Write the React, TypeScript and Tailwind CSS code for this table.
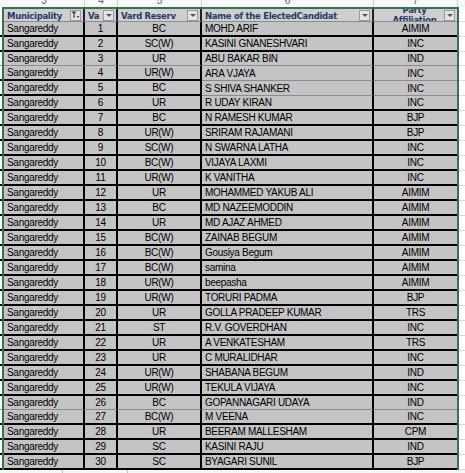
import React from 'react';

type Row = [number, string, string, string];

const rows: Row[] = [
  [1, 'BC', 'MOHD ARIF', 'AIMIM'],
  [2, 'SC(W)', 'KASINI GNANESHVARI', 'INC'],
  [3, 'UR', 'ABU BAKAR BIN', 'IND'],
  [4, 'UR(W)', 'ARA VJAYA', 'INC'],
  [5, 'BC', 'S SHIVA SHANKER', 'INC'],
  [6, 'UR', 'R UDAY KIRAN', 'INC'],
  [7, 'BC', 'N RAMESH KUMAR', 'BJP'],
  [8, 'UR(W)', 'SRIRAM RAJAMANI', 'BJP'],
  [9, 'SC(W)', 'N SWARNA LATHA', 'INC'],
  [10, 'BC(W)', 'VIJAYA LAXMI', 'INC'],
  [11, 'UR(W)', 'K VANITHA', 'INC'],
  [12, 'UR', 'MOHAMMED YAKUB ALI', 'AIMIM'],
  [13, 'BC', 'MD NAZEEMODDIN', 'AIMIM'],
  [14, 'UR', 'MD AJAZ AHMED', 'AIMIM'],
  [15, 'BC(W)', 'ZAINAB BEGUM', 'AIMIM'],
  [16, 'BC(W)', 'Gousiya Begum', 'AIMIM'],
  [17, 'BC(W)', 'samina', 'AIMIM'],
  [18, 'UR(W)', 'beepasha', 'AIMIM'],
  [19, 'UR(W)', 'TORURI PADMA', 'BJP'],
  [20, 'UR', 'GOLLA PRADEEP KUMAR', 'TRS'],
  [21, 'ST', 'R.V. GOVERDHAN', 'INC'],
  [22, 'UR', 'A VENKATESHAM', 'TRS'],
  [23, 'UR', 'C MURALIDHAR', 'INC'],
  [24, 'UR(W)', 'SHABANA BEGUM', 'IND'],
  [25, 'UR(W)', 'TEKULA VIJAYA', 'INC'],
  [26, 'BC', 'GOPANNAGARI UDAYA', 'IND'],
  [27, 'BC(W)', 'M VEENA', 'INC'],
  [28, 'UR', 'BEERAM MALLESHAM', 'CPM'],
  [29, 'SC', 'KASINI RAJU', 'IND'],
  [30, 'SC', 'BYAGARI SUNIL', 'BJP'],
];

// rows whose bottom rule is a thin grey line instead of the heavy black one
const thinAll = new Set([3, 26]);
const thinRight = new Set([4, 5]);

const THICK = 'border-b-2 border-b-black';
const THIN = 'border-b border-b-[#8c8c8c]';

function FilterButton({ active }: { active?: boolean }) {
  return (
    <div className="w-[11px] h-[11px] mr-[2px] shrink-0 border border-[#9b9b9b] bg-[#e4e4e4] flex items-center justify-center">
      {active ? (
        <svg width="9" height="8" viewBox="0 0 9 8">
          <path d="M0.5 0.5h5L3.6 3v3.5L2.4 7.2V3z" fill="#444" />
          <path d="M5.5 5h3L7 7z" fill="#444" />
        </svg>
      ) : (
        <svg width="6" height="3" viewBox="0 0 6 3">
          <path d="M0 0h6L3 3z" fill="#555" />
        </svg>
      )}
    </div>
  );
}

function HeaderCell({ width, children, button, last }: { width: string; children: React.ReactNode; button?: React.ReactNode; last?: boolean }) {
  return (
    <div
      className={`${width} h-full flex items-center bg-[#cfcfcf] border-b border-b-[#8c8c8c] ${last ? '' : 'border-r-2 border-r-[#222]'} overflow-hidden`}
    >
      <div className="flex-1 min-w-0 overflow-hidden whitespace-nowrap pl-[3px]">{children}</div>
      {button}
    </div>
  );
}

function DataRow({ row }: { row: Row }) {
  const [no, res, name, party] = row;
  const left = thinAll.has(no) ? THIN : THICK;
  const right = thinAll.has(no) || thinRight.has(no) ? THIN : THICK;
  const h = thinAll.has(no) ? 'h-[14px]' : 'h-[15px]';
  const cell = 'h-full bg-[#c4c4c4] flex items-center overflow-hidden whitespace-nowrap';

  return (
    <div className={`flex ${h}`}>
      <div className={`w-[2px] h-full bg-white ${left}`} />
      <div className="w-[2px] h-full bg-[#35734a]" />
      <div className={`w-[81px] pl-[3px] border-r-2 border-r-black ${cell} ${left}`}>Sangareddy</div>
      <div className={`w-[33px] justify-center border-r-2 border-r-black ${cell} ${left}`}>{no}</div>
      <div className={`w-[84px] justify-center border-r-2 border-r-black ${cell} ${left}`}>{res}</div>
      <div className={`w-[172px] pl-[3px] border-r-2 border-r-black ${cell} ${right}`}>{name}</div>
      <div className={`w-[83px] justify-center ${cell} ${right}`}>{party}</div>
      <div className="w-[2px] h-full bg-[#35734a]" />
      <div className="flex-1 h-full bg-white border-b border-b-[#dadada]" />
    </div>
  );
}

export default function App() {
  const head = "font-['DejaVu_Sans',sans-serif] font-bold text-[8.5px] text-[#1f3a6b] leading-[10px]";

  return (
    <div className="w-[465px] h-[473px] bg-white overflow-hidden font-['Liberation_Sans',Arial,sans-serif] text-[10px] tracking-[-0.3px] text-black leading-[13px]">
      {/* column number strip */}
      <div className="flex h-[7px] overflow-hidden bg-[#f7f7f7] text-[#666] text-[10px] leading-[10px]">
        <div className="w-[4px]" />
        <div className="w-[81px] flex justify-center border-r border-r-[#cfcfcf] -mt-[4px]">3</div>
        <div className="w-[33px] flex justify-center border-r border-r-[#cfcfcf] -mt-[4px]">4</div>
        <div className="w-[84px] flex justify-center border-r border-r-[#cfcfcf] -mt-[4px]">5</div>
        <div className="w-[172px] flex justify-center border-r border-r-[#cfcfcf] -mt-[4px]">6</div>
        <div className="w-[83px] flex justify-center -mt-[4px]">7</div>
        <div className="flex-1 border-l border-l-[#cfcfcf]" />
      </div>

      {/* green frame top */}
      <div className="flex h-[2px]">
        <div className="w-[2px] bg-white" />
        <div className="w-[457px] bg-[#35734a]" />
        <div className="flex-1 bg-white" />
      </div>

      {/* header row */}
      <div className="flex h-[13px]">
        <div className="w-[2px] h-full bg-white" />
        <div className="w-[2px] h-full bg-[#35734a]" />
        <HeaderCell width="w-[81px]" button={<FilterButton active />}>
          <span className={head}>Municipality</span>
        </HeaderCell>
        <HeaderCell width="w-[33px]" button={<FilterButton />}>
          <span className={head}>Va</span>
        </HeaderCell>
        <HeaderCell width="w-[84px]" button={<FilterButton />}>
          <span className={head}>Vard Reserv</span>
        </HeaderCell>
        <HeaderCell width="w-[172px]" button={<FilterButton />}>
          <span className={head}>Name of the ElectedCandidat</span>
        </HeaderCell>
        <HeaderCell width="w-[83px]" button={<FilterButton />} last>
          <div className={`${head} h-[12px] overflow-hidden flex flex-col items-center justify-center pl-[8px]`}>
            <span className="shrink-0">Party</span>
            <span className="shrink-0">Affiliation</span>
          </div>
        </HeaderCell>
        <div className="w-[2px] h-full bg-[#35734a]" />
        <div className="flex-1 h-full bg-white border-b border-b-[#dadada]" />
      </div>

      {rows.map((r) => (
        <DataRow key={r[0]} row={r} />
      ))}

      {/* below the table */}
      <div className="flex h-[6px] bg-[#f6f6f6]">
        <div className="w-[63px] border-r border-r-[#bdbdbd]" />
        <div className="w-[65px] border-r border-r-[#bdbdbd]" />
        <div className="flex-1" />
      </div>
    </div>
  );
}
